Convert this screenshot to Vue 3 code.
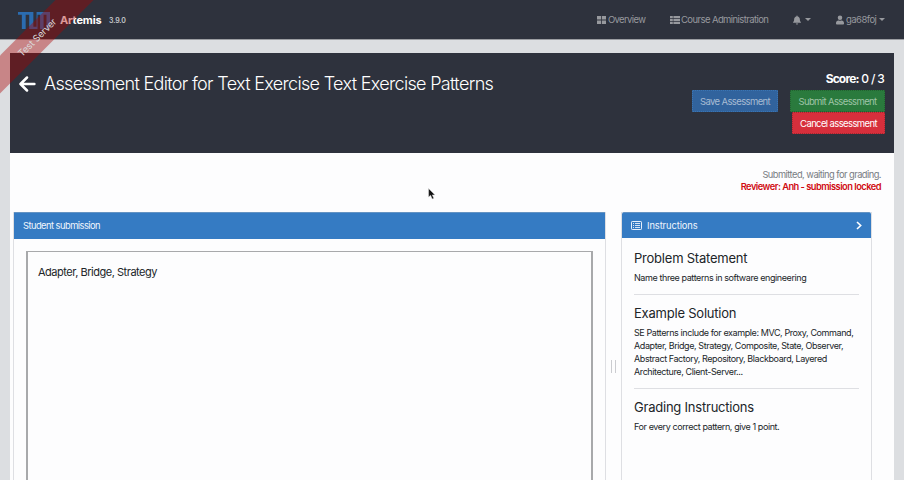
<script setup>
const instructions = [
  { title: 'Problem Statement', lines: ['Name three patterns in software engineering'] },
  {
    title: 'Example Solution',
    lines: [
      'SE Patterns include for example: MVC, Proxy, Command,',
      'Adapter, Bridge, Strategy, Composite, State, Observer,',
      'Abstract Factory, Repository, Blackboard, Layered',
      'Architecture, Client-Server...',
    ],
  },
  { title: 'Grading Instructions', lines: ['For every correct pattern, give 1 point.'] },
]
</script>

<template>
  <div class="page">
    <nav class="navbar">
      <svg class="logo" width="32" height="17" viewBox="4 1 50 36" preserveAspectRatio="none">
        <path d="M28 1V32H33V1H54V37H48.500V7H44V37H38.500V7H34.500V37H21.500V7H16V37H10V7H4V1Z" fill="#2b6cb0" />
      </svg>
      <span class="brand">Artemis</span>
      <span class="version">3.9.0</span>
      <div class="links">
        <a class="link overview">
          <svg width="9" height="8" viewBox="0 0 9 8" fill="currentColor"><path d="M0 0H4.100V3.600H0ZM4.900 0H9V3.600H4.900ZM0 4.400H4.100V8H0ZM4.900 4.400H9V8H4.900Z" /></svg>
          <span>Overview</span>
        </a>
        <a class="link courses">
          <svg width="10" height="8" viewBox="0 0 10 8" fill="currentColor"><path d="M0 0H2.800V2.200H0ZM3.400 0H10V2.200H3.400ZM0 2.900H2.800V5.100H0ZM3.400 2.900H10V5.100H3.400ZM0 5.800H2.800V8H0ZM3.400 5.800H10V8H3.400Z" /></svg>
          <span>Course Administration</span>
        </a>
        <a class="link bell">
          <svg width="8" height="10" viewBox="0 0 448 512" fill="currentColor"><path d="M224 512c35 0 64-29 64-64H160c0 35 29 64 64 64zm215-150c-19-21-55-52-55-154 0-78-54-140-128-155V32a32 32 0 1 0-64 0v21C118 68 64 130 64 208c0 102-36 133-55 154-6 6-9 14-9 22 0 16 13 32 32 32h384c19 0 32-16 32-32 0-8-3-16-9-22z" /></svg>
          <i class="caret"></i>
        </a>
        <a class="link user">
          <svg width="8" height="10" viewBox="0 0 448 512" fill="currentColor"><path d="M224 256a128 128 0 1 0 0-256 128 128 0 0 0 0 256zm90 32h-17a174 174 0 0 1-146 0h-17C60 288 0 348 0 422v42c0 27 21 48 48 48h352c27 0 48-21 48-48v-42c0-74-60-134-134-134z" /></svg>
          <span>ga68foj</span>
          <i class="caret"></i>
        </a>
      </div>
    </nav>

    <main class="content">
      <header class="head">
        <div class="heading">
          <svg width="17" height="16" viewBox="0 0 17 16" fill="none" stroke="#fff" stroke-width="2.500" stroke-linecap="round" stroke-linejoin="round"><path d="M8 1.500L1.500 8L8 14.500M2 8H15.400" /></svg>
          <h1>Assessment Editor for Text Exercise Text Exercise Patterns</h1>
        </div>
        <div class="actions">
          <div class="score"><b>Score:</b> 0 / 3</div>
          <div class="row">
            <button class="btn save">Save Assessment</button>
            <button class="btn submit">Submit Assessment</button>
          </div>
          <button class="btn cancel">Cancel assessment</button>
        </div>
      </header>

      <div class="status">
        <div class="waiting">Submitted, waiting for grading.</div>
        <div class="reviewer">Reviewer: Anh - submission locked</div>
      </div>

      <div class="columns">
        <section class="card submission">
          <div class="bar">Student submission</div>
          <div class="answer"><span>Adapter, Bridge, Strategy</span></div>
        </section>
        <div class="handle"><i></i><i></i></div>
        <section class="card guide">
          <div class="bar">
            <svg width="11" height="9" viewBox="0 0 11 9" fill="none" stroke="#e6effa"><rect x=".5" y=".5" width="10" height="8" rx=".7" /><path d="M2 2.500H3M4 2.500H9M2 4.500H3M4 4.500H9M2 6.500H3M4 6.500H9" stroke-width=".9" /></svg>
            <span>Instructions</span>
            <svg class="chevron" width="6" height="9" viewBox="0 0 6 9" fill="none" stroke="#fff" stroke-width="1.600"><path d="M1 1L4.700 4.500L1 8" /></svg>
          </div>
          <div class="sections">
            <article v-for="item in instructions" :key="item.title">
              <h2>{{ item.title }}</h2>
              <p v-for="line in item.lines" :key="line">{{ line }}</p>
            </article>
          </div>
        </section>
      </div>
    </main>

    <div class="ribbon"><span>Test Server</span></div>
    <svg class="cursor" width="8" height="12" viewBox="0 0 8 12"><path d="M.6.6V9L2.600 7.300L4.200 11L5.800 10.300L4.300 6.900H7Z" fill="#111" stroke="#ddd" stroke-width=".5" /></svg>
  </div>
</template>

<style>
body { background: #dcdee1; }
</style>

<style scoped>
.page {
  position: relative;
  width: 904px;
  height: 480px;
  overflow: hidden;
  background: #dcdee1;
  font-family: Inter, "Liberation Sans", sans-serif;
  color: #212529;
}
.page * { box-sizing: border-box; }
.page svg { flex: none; }
.navbar {
  display: flex;
  align-items: center;
  height: 40px;
  padding: 0 18px;
  background: #2e323d;
  border-bottom: 1px solid #9b9da2;
  white-space: nowrap;
}
.logo { margin-top: 2px; }
.brand { margin: 1px 0 0 10px; width: 42px; color: #fff; font-size: 11px; font-weight: 700; letter-spacing: -.15px; }
.version { margin: 2px 0 0 7px; color: #c7c8cc; font-size: 7px; font-weight: 600; letter-spacing: -.15px; }
.links { display: flex; margin-left: auto; color: #97999e; font-size: 9.500px; letter-spacing: -.65px; }
.link { display: flex; align-items: center; gap: 3px; height: 12px; }
.overview { width: 73px; gap: 2px; }
.courses { width: 123px; gap: 1px; letter-spacing: -.59px; }
.bell { width: 43px; gap: 4px; }
.user { width: 50px; gap: 2px; letter-spacing: -.55px; }
.caret { border: 3px solid transparent; border-top-color: currentColor; border-bottom: 0; }
.user .caret { margin-left: 1px; }
.content { width: 884px; height: 427px; margin: 13px 0 0 10px; background: #fdfdfe; }
.head { display: flex; justify-content: space-between; height: 100px; padding: 19px 9px 0 9px; background: #2e323d; color: #fff; }
.heading { display: flex; gap: 8px; height: 24px; align-items: center; }
h1 { margin: 0; font-size: 18px; font-weight: 350; line-height: 24px; letter-spacing: -.67px; white-space: nowrap; }
.actions { display: flex; flex-direction: column; align-items: flex-end; }
.score { height: 18px; font-size: 12px; line-height: 14px; letter-spacing: -.85px; word-spacing: .4px; font-weight: 500; padding-right: 1px; }
.score b { font-weight: 700; }
.row { display: flex; gap: 12px; }
.btn { height: 22px; padding: 1px 0 0; border: 1px dotted transparent; border-radius: 1px; font: 400 9.500px/20px Inter, sans-serif; letter-spacing: -.62px; white-space: nowrap; }
.save { width: 86px; background: #31639d; border-color: #3a75b4; color: #a7bbd3; }
.submit { width: 95px; background: #2a7a3d; border-color: #21612f; color: #9ec4a6; }
.cancel { width: 93px; background: #d72f3c; border-color: #a52730; color: #fff; }
.status { height: 59px; padding: 16px 13px 0 0; text-align: right; font-size: 9.300px; line-height: 12px; }
.waiting { color: #777c82; letter-spacing: -.53px; }
.reviewer { color: #d00b12; font-weight: 600; letter-spacing: -.52px; }
.columns { display: flex; height: 268px; padding-left: 3px; }
.card { border: 1px solid #dedfe3; border-width: 0 1px; }
.bar { display: flex; align-items: center; background: #357bc3; color: #f0f6fd; font-size: 9.300px; letter-spacing: -.08px; border-top: 1px solid #6493c3; }
.submission { width: 593px; }
.submission .bar { height: 27px; padding: 0 0 1px 9px; letter-spacing: -.52px; }
.answer { height: 240px; margin: 12px 12px 0; padding: 12px 10px; border: 2px solid #a8a9ab; border-top-width: 1.500px; font-size: 11px; line-height: 16px; letter-spacing: -.48px; }
.handle { display: flex; gap: 3px; width: 15px; padding-left: 5px; align-items: flex-start; padding-top: 148px; }
.handle i { width: 1px; height: 13px; background: #cbccd0; }
.guide { width: 251px; }
.guide .bar { height: 26px; padding: 0 9px 1px; gap: 5px; border-radius: 2px 2px 0 0; }
.chevron { margin-left: auto; }
.sections { padding: 12px 12px 0; }
article { height: 55px; border-bottom: 1px solid #dedfe3; }
article + article { padding-top: 10px; }
article:nth-child(1) { height: 45px; }
article:nth-child(2) { height: 94px; }
article:last-child { border-bottom: 0; }
h2 { margin: 0 0 5px; font-size: 13px; font-weight: 400; line-height: 16px; letter-spacing: -.22px; }
p { margin: 0; font-size: 9px; line-height: 13px; letter-spacing: -.41px; white-space: nowrap; }
.ribbon {
  position: absolute;
  left: -63px;
  top: 23.500px;
  width: 200px;
  height: 27px;
  background: rgba(170, 0, 0, .4);
  color: #dadada;
  font-size: 9.500px;
  line-height: 28px;
  text-align: center;
  letter-spacing: -.2px;
  transform: rotate(-45deg);
}
.cursor { position: absolute; left: 428px; top: 188px; }
</style>
